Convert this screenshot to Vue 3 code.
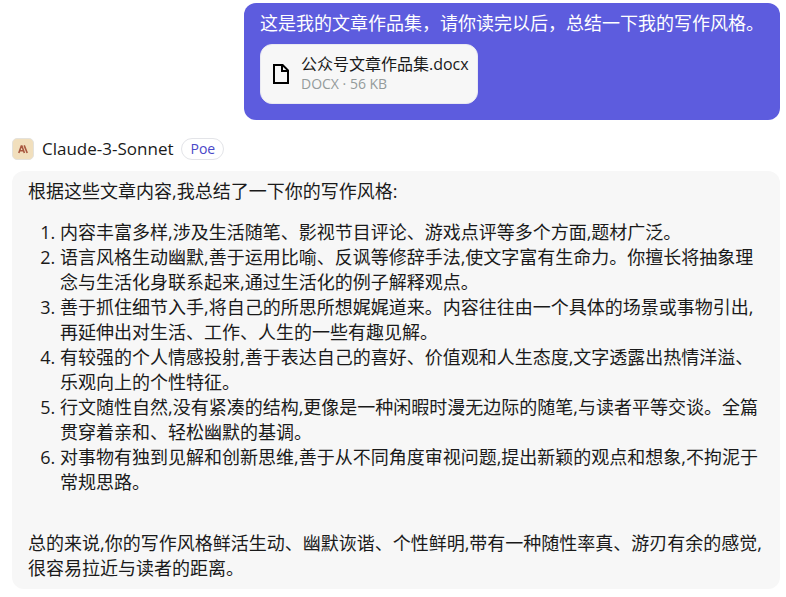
<script setup>
const question = '这是我的文章作品集，请你读完以后，总结一下我的写作风格。'

const attachment = {
  name: '公众号文章作品集.docx',
  meta: 'DOCX · 56 KB',
}

const intro = '根据这些文章内容,我总结了一下你的写作风格:'

const points = [
  '内容丰富多样,涉及生活随笔、影视节目评论、游戏点评等多个方面,题材广泛。',
  '语言风格生动幽默,善于运用比喻、反讽等修辞手法,使文字富有生命力。你擅长将抽象理念与生活化身联系起来,通过生活化的例子解释观点。',
  '善于抓住细节入手,将自己的所思所想娓娓道来。内容往往由一个具体的场景或事物引出,再延伸出对生活、工作、人生的一些有趣见解。',
  '有较强的个人情感投射,善于表达自己的喜好、价值观和人生态度,文字透露出热情洋溢、乐观向上的个性特征。',
  '行文随性自然,没有紧凑的结构,更像是一种闲暇时漫无边际的随笔,与读者平等交谈。全篇贯穿着亲和、轻松幽默的基调。',
  '对事物有独到见解和创新思维,善于从不同角度审视问题,提出新颖的观点和想象,不拘泥于常规思路。',
]

const summary =
  '总的来说,你的写作风格鲜活生动、幽默诙谐、个性鲜明,带有一种随性率真、游刃有余的感觉,很容易拉近与读者的距离。'
</script>

<template>
  <main class="chat">
    <section class="chat__message chat__message--human">
      <p class="chat__text">{{ question }}</p>
      <div class="attachment">
        <svg class="attachment__icon" viewBox="0 0 24 24" aria-hidden="true">
          <path
            d="M5 3h8.6L19 8.4V21H5zM13 3v6h6"
            fill="none"
            stroke="currentColor"
            stroke-width="2"
          />
        </svg>
        <div class="attachment__info">
          <span class="attachment__name">{{ attachment.name }}</span>
          <span class="attachment__meta">{{ attachment.meta }}</span>
        </div>
      </div>
    </section>

    <header class="bot">
      <svg class="bot__avatar" viewBox="0 0 22 22" aria-hidden="true">
        <rect x="0.5" y="0.5" width="21" height="21" rx="4.5" fill="#f1dfbd" stroke="#e4e2dc" />
        <path
          d="M6.8 15l2.5-7h.6l2.5 7M7.8 12.8h3.6M12.2 7.4l3 7.6"
          fill="none"
          stroke="#a8573f"
          stroke-width="1.6"
        />
      </svg>
      <span class="bot__name">Claude-3-Sonnet</span>
      <span class="bot__tag">Poe</span>
    </header>

    <section class="chat__message chat__message--bot">
      <p class="chat__text">{{ intro }}</p>
      <ol class="chat__list">
        <li v-for="point in points" :key="point">{{ point }}</li>
      </ol>
      <p class="chat__text">{{ summary }}</p>
    </section>
  </main>
</template>

<style>
body {
  margin: 0;
  background-color: #ffffff;
}
</style>

<style scoped>
.chat {
  display: flex;
  flex-direction: column;
  padding: 3px 6px 8px 12px;
  color: #1a1a1a;
  font-family: 'Open Sans', 'Noto Sans CJK SC', sans-serif;
  font-size: 18px;
  line-height: 25px;
}

.chat__message {
  border-radius: 12px;
  padding: 8px 16px;
}

.chat__message--human {
  align-self: flex-end;
  padding-bottom: 16px;
  background-color: #5d5cde;
  color: #ffffff;
}

.chat__message--bot {
  background-color: #f7f7f7;
}

.chat__text {
  margin: 0;
}

.chat__list {
  margin: 16px 0 36px;
  padding-left: 32px;
}

.attachment {
  display: flex;
  width: fit-content;
  align-items: center;
  gap: 8px;
  margin-top: 8px;
  border: 1px solid #e9e9f2;
  border-radius: 12px;
  background-color: #f7f7f7;
  padding: 9px 8px;
  color: #000000;
}

.attachment__icon {
  width: 24px;
  height: 24px;
}

.attachment__info {
  display: flex;
  flex-direction: column;
  line-height: 20px;
}

.attachment__name {
  color: #1a1a1a;
  font-size: 16px;
}

.attachment__meta {
  color: #949b9b;
  font-size: 14px;
}

.bot {
  display: flex;
  height: 22px;
  align-items: center;
  gap: 8px;
  margin: 18px 0 11px;
}

.bot__avatar {
  width: 22px;
  height: 22px;
}

.bot__name {
  font-size: 17px;
  line-height: 24px;
}

.bot__tag {
  border: 1px solid #e3e4e8;
  border-radius: 11px;
  padding: 0 8px;
  color: #4a48c8;
  font-size: 14px;
  line-height: 20px;
}
</style>
